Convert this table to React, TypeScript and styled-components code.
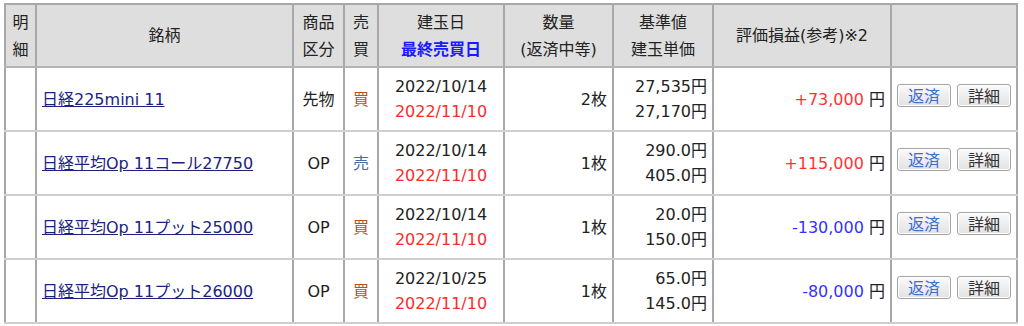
import styled, { createGlobalStyle } from "styled-components";

const GlobalStyle = createGlobalStyle`
  body {
    margin: 0;
    padding: 3px 4px;
    background: #fff;
    font-family: "DejaVu Sans", "Noto Sans CJK JP", sans-serif;
    font-size: 16px;
    color: #222;
  }
`;

const Table = styled.table`
  border-collapse: collapse;
  table-layout: fixed;
  width: 1012px;
  border: 2px solid #a8a8a8;
`;

const HeadCell = styled.th`
  background: #dedede;
  font-weight: normal;
  height: 61px;
  line-height: 27px;
  text-align: center;
  border: 2px solid #a8a8a8;
  border-bottom-color: #b4b4b4;
  padding: 0;
`;

const Cell = styled.td<{ $align?: string }>`
  height: 62px;
  line-height: 25px;
  text-align: ${(p) => p.$align || "center"};
  border-left: 2px solid #a8a8a8;
  border-right: 2px solid #a8a8a8;
  border-bottom: 2px solid #cfcfcf;
  padding: 0 5px;
  vertical-align: middle;
`;

const NameLink = styled.a`
  color: #1a237e;
  text-decoration: underline;
  cursor: pointer;
`;

const Side = styled.span<{ $buy: boolean }>`
  color: ${(p) => (p.$buy ? "#c0501a" : "#4a6aa8")};
`;

const DueDate = styled.div`
  color: #ff2b2b;
`;

const HeadBlue = styled.div`
  color: #1a1aff;
  font-weight: bold;
`;

const Profit = styled.span<{ $plus: boolean }>`
  color: ${(p) => (p.$plus ? "#ff3333" : "#3333ff")};
`;

const Buttons = styled.div`
  display: flex;
  gap: 6px;
  justify-content: center;
  margin-top: -8px;
`;

const Button = styled.button<{ $blue?: boolean }>`
  width: 55px;
  height: 23px;
  padding: 0;
  font-family: "Noto Sans CJK JP", sans-serif;
  font-size: 16px;
  line-height: 19px;
  color: ${(p) => (p.$blue ? "#3a6fd0" : "#333")};
  background: linear-gradient(#fafafa, #e2e2e2);
  border: 1px solid #a4a4a4;
  border-radius: 3px;
  box-shadow: inset 0 0 0 1px #fff;
`;

const ROWS = [
  { name: "日経225mini 11", kind: "先物", buy: true, open: "2022/10/14", due: "2022/11/10", qty: "2枚", base: "27,535円", unit: "27,170円", pl: "+73,000", plus: true },
  { name: "日経平均Op 11コール27750", kind: "OP", buy: false, open: "2022/10/14", due: "2022/11/10", qty: "1枚", base: "290.0円", unit: "405.0円", pl: "+115,000", plus: true },
  { name: "日経平均Op 11プット25000", kind: "OP", buy: true, open: "2022/10/14", due: "2022/11/10", qty: "1枚", base: "20.0円", unit: "150.0円", pl: "-130,000", plus: false },
  { name: "日経平均Op 11プット26000", kind: "OP", buy: true, open: "2022/10/25", due: "2022/11/10", qty: "1枚", base: "65.0円", unit: "145.0円", pl: "-80,000", plus: false },
];

const App = () => {
  return (
    <>
      <GlobalStyle />
      <Table>
        <colgroup>
          <col style={{ width: 31 }} />
          <col style={{ width: 257 }} />
          <col style={{ width: 51 }} />
          <col style={{ width: 34 }} />
          <col style={{ width: 126 }} />
          <col style={{ width: 109 }} />
          <col style={{ width: 100 }} />
          <col style={{ width: 178 }} />
          <col style={{ width: 126 }} />
        </colgroup>
        <thead>
          <tr>
            <HeadCell>明<br />細</HeadCell>
            <HeadCell>銘柄</HeadCell>
            <HeadCell>商品<br />区分</HeadCell>
            <HeadCell>売<br />買</HeadCell>
            <HeadCell>
              建玉日
              <HeadBlue>最終売買日</HeadBlue>
            </HeadCell>
            <HeadCell>数量<br />(返済中等)</HeadCell>
            <HeadCell>基準値<br />建玉単価</HeadCell>
            <HeadCell>評価損益(参考)※2</HeadCell>
            <HeadCell></HeadCell>
          </tr>
        </thead>
        <tbody>
          {ROWS.map((row) => (
            <tr key={row.name}>
              <Cell></Cell>
              <Cell $align="left">
                <NameLink>{row.name}</NameLink>
              </Cell>
              <Cell>{row.kind}</Cell>
              <Cell>
                <Side $buy={row.buy}>{row.buy ? "買" : "売"}</Side>
              </Cell>
              <Cell>
                <div>{row.open}</div>
                <DueDate>{row.due}</DueDate>
              </Cell>
              <Cell $align="right">{row.qty}</Cell>
              <Cell $align="right">
                <div>{row.base}</div>
                <div>{row.unit}</div>
              </Cell>
              <Cell $align="right">
                <Profit $plus={row.plus}>{row.pl}</Profit> 円
              </Cell>
              <Cell>
                <Buttons>
                  <Button $blue>返済</Button>
                  <Button>詳細</Button>
                </Buttons>
              </Cell>
            </tr>
          ))}
        </tbody>
      </Table>
    </>
  );
};

export default App;
